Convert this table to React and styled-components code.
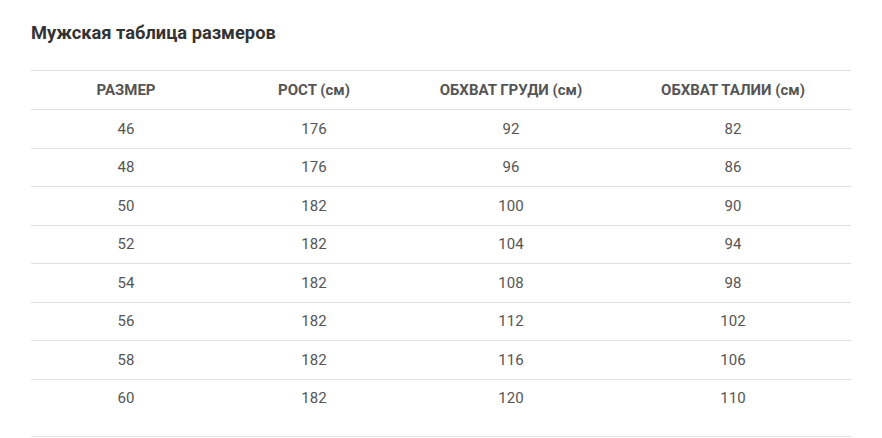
import React from 'react';
import styled, { createGlobalStyle } from 'styled-components';

const GlobalStyle = createGlobalStyle`
	body {
		margin: 0;
		background: #fff;
		font-family: Roboto, "Liberation Sans", Arial, sans-serif;
	}
`;

const Page = styled.div`
	padding: 21px 31px 0 31px;
	width: 820px;
`;

const Title = styled.h3`
	margin: 0 0 25px;
	font-size: 18.3px;
	line-height: 24px;
	font-weight: 700;
	color: #333;
`;

const TableWrap = styled.div`
	border-bottom: 1px solid #e4e4e4;
	padding-bottom: 19px;
`;

const Table = styled.table`
	width: 100%;
	border-collapse: collapse;
	table-layout: fixed;
	border-top: 1px solid #e0e0e0;
`;

const Th = styled.th`
	width: ${(p) => p.w}px;
	padding: 9px 0;
	line-height: 20px;
	font-size: 15px;
	font-weight: 700;
	color: #555;
	text-align: center;
	border-bottom: 1px solid #e0e0e0;
`;

const Row = styled.tr`
	&:not(:last-child) td {
		border-bottom: 1px solid #e0e0e0;
	}
`;

const Td = styled.td`
	padding: 8.75px 0;
	line-height: 20px;
	font-size: 15px;
	color: #555;
	text-align: center;
`;

const columns = [
	{ title: 'РАЗМЕР', w: 190 },
	{ title: 'РОСТ (см)', w: 186 },
	{ title: 'ОБХВАТ ГРУДИ (см)', w: 208 },
	{ title: 'ОБХВАТ ТАЛИИ (см)', w: 236 },
];

const rows = [
	[46, 176, 92, 82],
	[48, 176, 96, 86],
	[50, 182, 100, 90],
	[52, 182, 104, 94],
	[54, 182, 108, 98],
	[56, 182, 112, 102],
	[58, 182, 116, 106],
	[60, 182, 120, 110],
];

const App = () => (
	<>
		<GlobalStyle />
		<Page>
			<Title>Мужская таблица размеров</Title>
			<TableWrap>
				<Table>
					<thead>
						<tr>
							{columns.map((c) => (
								<Th key={c.title} w={c.w}>{c.title}</Th>
							))}
						</tr>
					</thead>
					<tbody>
						{rows.map((r) => (
							<Row key={r[0]}>
								{r.map((v, i) => (
									<Td key={i}>{v}</Td>
								))}
							</Row>
						))}
					</tbody>
				</Table>
			</TableWrap>
		</Page>
	</>
);

export default App;
